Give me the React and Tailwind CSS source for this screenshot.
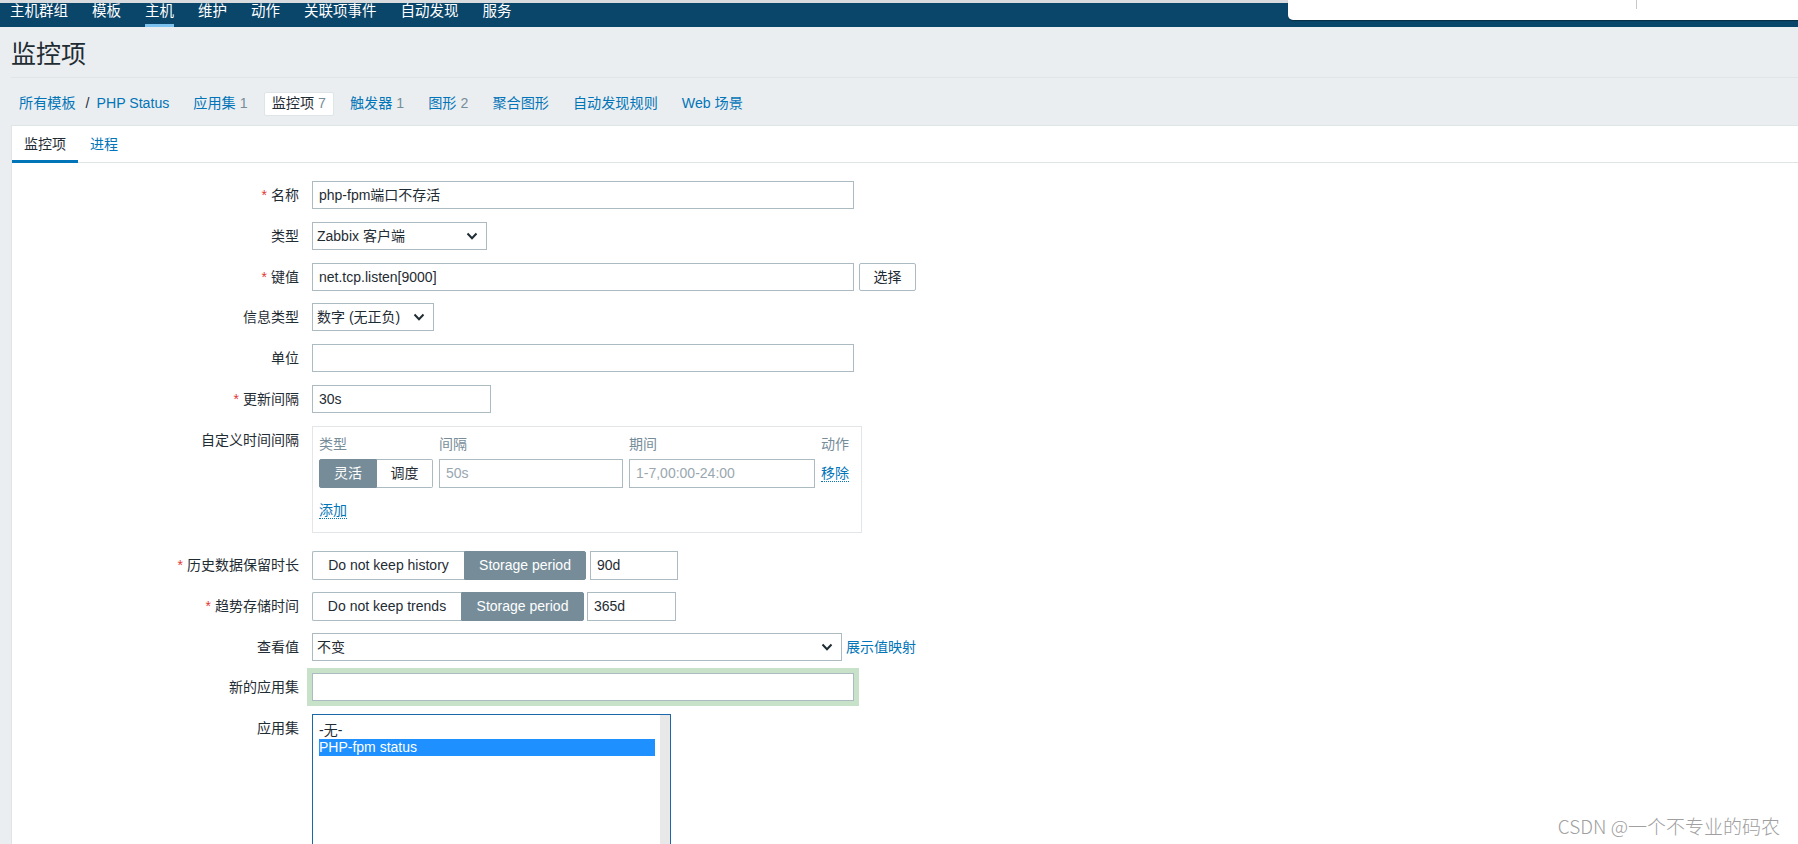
import React from 'react';

const navItems = ['主机群组', '模板', '主机', '维护', '动作', '关联项事件', '自动发现', '服务'];

const tabs = [
  { name: '应用集', count: '1' },
  { name: '监控项', count: '7', active: true },
  { name: '触发器', count: '1' },
  { name: '图形', count: '2' },
  { name: '聚合图形' },
  { name: '自动发现规则' },
  { name: 'Web 场景' },
];

const Chevron = () => (
  <svg width="12" height="8" viewBox="0 0 12 8" className="shrink-0">
    <polyline points="1.5,1.5 6,6.2 10.5,1.5" fill="none" stroke="#1f2c33" strokeWidth="2" />
  </svg>
);

const Row = ({ label, required, children, className = 'mb-[13px]' }) => (
  <div className={`flex items-start ${className}`}>
    <div className="w-[287px] shrink-0 text-right leading-[28px]">
      {required && <span className="mr-[4px] text-[#e33734]">*</span>}
      {label}
    </div>
    <div className="ml-[13px] flex items-center">{children}</div>
  </div>
);

const Field = ({ w, value, muted }) => (
  <div className={`${w} flex h-[28px] items-center border border-[#acbbc2] bg-white px-[6px] ${muted ? 'text-[#9aa7af]' : ''}`}>
    {value}
  </div>
);

const Select = ({ w, value }) => (
  <div className={`${w} flex h-[28px] items-center justify-between border border-[#acbbc2] bg-white pl-[4px] pr-[8px]`}>
    <span>{value}</span>
    <Chevron />
  </div>
);

const Segmented = ({ left, leftW, rightW }) => (
  <div className="flex h-[29px]">
    <div className={`${leftW} flex items-center justify-center rounded-l-[2px] border border-r-0 border-[#acbbc2] bg-white`}>{left}</div>
    <div className={`${rightW} flex items-center justify-center rounded-r-[2px] border border-[#768d99] bg-[#768d99] text-white`}>Storage period</div>
  </div>
);

export default function App() {
  return (
    <div className="relative h-[844px] w-full overflow-hidden bg-[#ebeef0] font-['Liberation_Sans','Noto_Sans_CJK_SC',sans-serif] text-[14px] text-[#1f2c33]">
      <div className="h-[3px] bg-[#d9dcde]" />
      <nav className="flex h-[24px] gap-[24px] bg-[#0a466a] pl-[10px] text-[14.5px] leading-[16px] text-white">
        {navItems.map((item) => (
          <div key={item} className="relative h-full">
            <span>{item}</span>
            {item === '主机' && <span className="absolute bottom-0 left-0 right-0 h-[3px] bg-[#7cc2ee]" />}
          </div>
        ))}
      </nav>

      {/* browser overlay at the top right */}
      <div className="absolute left-[1288px] right-0 top-0 h-[20px] rounded-bl-[5px] bg-white shadow-[0_1px_1px_rgba(0,0,0,0.35)]">
        <div className="ml-[348px] h-[9px] w-px bg-[#c9c9c9]" />
      </div>

      <div className="ml-[11px]">
        <h1 className="border-b border-[#dfe4e7] pb-[10px] pt-[14px] text-[25px] leading-[26px] text-[#1f2c33]">监控项</h1>

        <div className="mt-[14px] flex h-[24px] items-center gap-[8px] text-[14.15px]">
          <div className="px-[8px] text-[#0275b8]">
            所有模板<span className="ml-[10px] mr-[7px] text-[#1f2c33]">/</span>PHP Status
          </div>
          {tabs.map((t) =>
            t.active ? (
              <div key={t.name} className="flex h-[24px] items-center rounded-[2px] border border-[#dfe4e7] bg-white px-[7px]">
                {t.name} <span className="ml-[4px] text-[#768d99]">{t.count}</span>
              </div>
            ) : (
              <div key={t.name} className="flex h-[24px] items-center px-[8px] text-[#0275b8]">
                {t.name}
                {t.count && <span className="ml-[4px] text-[#768d99]">{t.count}</span>}
              </div>
            )
          )}
        </div>

        <div className="mt-[9px] h-[740px] border-l border-t border-[#dfe4e7] bg-white">
          <div className="flex h-[37px] border-b border-[#dfe4e7]">
            <div className="relative flex items-center px-[12px]">
              监控项
              <span className="absolute -bottom-px left-0 right-0 h-[3px] bg-[#0275b8]" />
            </div>
            <div className="flex items-center px-[12px] text-[#0275b8]">进程</div>
          </div>

          <div className="pt-[18px]">
            <Row label="名称" required>
              <Field w="w-[542px]" value="php-fpm端口不存活" />
            </Row>
            <Row label="类型">
              <Select w="w-[175px]" value="Zabbix 客户端" />
            </Row>
            <Row label="键值" required className="mb-[12px]">
              <Field w="w-[542px]" value="net.tcp.listen[9000]" />
              <div className="ml-[5px] flex h-[28px] w-[57px] items-center justify-center rounded-[2px] border border-[#acbbc2] bg-white">选择</div>
            </Row>
            <Row label="信息类型">
              <Select w="w-[122px]" value="数字 (无正负)" />
            </Row>
            <Row label="单位">
              <Field w="w-[542px]" value="" />
            </Row>
            <Row label="更新间隔" required>
              <Field w="w-[179px]" value="30s" />
            </Row>
            <Row label="自定义时间间隔" className="mb-[18px]">
              <div className="h-[107px] w-[550px] border border-[#e3e6e8] px-[6px] pt-[8px]">
                <div className="grid grid-cols-[114px_184px_186px_auto] gap-x-[6px] leading-[18px] text-[#768d99]">
                  <div>类型</div>
                  <div>间隔</div>
                  <div>期间</div>
                  <div>动作</div>
                </div>
                <div className="mt-[6px] grid grid-cols-[114px_184px_186px_auto] items-center gap-x-[6px]">
                  <div className="flex h-[29px]">
                    <div className="flex w-[58px] items-center justify-center rounded-l-[2px] border border-[#768d99] bg-[#768d99] text-white">灵活</div>
                    <div className="flex w-[56px] items-center justify-center rounded-r-[2px] border border-l-0 border-[#acbbc2] bg-white">调度</div>
                  </div>
                  <div className="flex h-[29px] items-center border border-[#acbbc2] px-[6px] text-[#9aa7af]">50s</div>
                  <div className="flex h-[29px] items-center border border-[#acbbc2] px-[6px] text-[#9aa7af]">1-7,00:00-24:00</div>
                  <div>
                    <span className="border-b border-dotted border-[#0275b8] leading-[18px] text-[#0275b8]">移除</span>
                  </div>
                </div>
                <div className="mt-[13px] leading-[18px]">
                  <span className="border-b border-dotted border-[#0275b8] text-[#0275b8]">添加</span>
                </div>
              </div>
            </Row>
            <Row label="历史数据保留时长" required className="mb-[12px]">
              <Segmented left="Do not keep history" leftW="w-[152px]" rightW="w-[122px]" />
              <Field w="ml-[4px] w-[88px] !h-[29px]" value="90d" />
            </Row>
            <Row label="趋势存储时间" required className="mb-[12px]">
              <Segmented left="Do not keep trends" leftW="w-[149px]" rightW="w-[123px]" />
              <Field w="ml-[3px] w-[89px] !h-[29px]" value="365d" />
            </Row>
            <Row label="查看值" className="mb-[12px]">
              <Select w="w-[530px]" value="不变" />
              <span className="ml-[4px] text-[#0275b8]">展示值映射</span>
            </Row>
            <Row label="新的应用集">
              <div className="h-[28px] w-[542px] border border-[#acbbc2] bg-white shadow-[0_0_0_5px_#c7e2c8]" />
            </Row>
            <Row label="应用集">
              <div className="flex h-[200px] w-[359px] border border-[#1c67a8] bg-white">
                <div className="flex-1 pl-[6px] pr-[5px] pt-[7px] leading-[17px]">
                  <div>-无-</div>
                  <div className="bg-[#1e90ff] text-white">PHP-fpm status</div>
                </div>
                <div className="w-[10px] bg-[#e8e8e8]" />
              </div>
            </Row>
          </div>
        </div>
      </div>

      <div className="absolute right-[18px] top-[813px] font-['Noto_Sans_CJK_SC',sans-serif] text-[19px] font-light leading-[26px] text-[#a0a0a0] [text-shadow:1px_1px_0_#ffffff]">
        CSDN @一个不专业的码农
      </div>
    </div>
  );
}
